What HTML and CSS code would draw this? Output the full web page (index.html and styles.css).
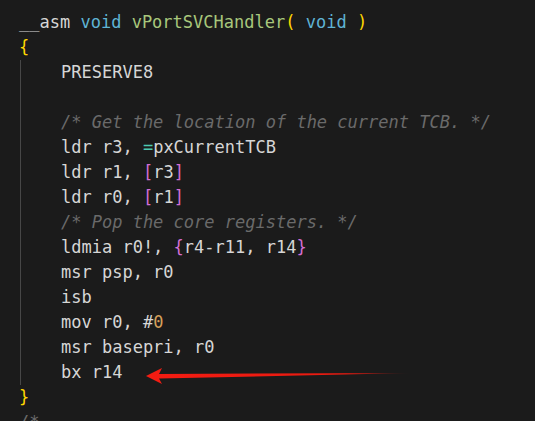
FILE: index.html
```html
<!DOCTYPE html>
<html>
<head>
<meta charset="utf-8">
<link rel="stylesheet" href="styles.css">
</head>
<body>
<div class="editor">
  <div class="line"><span class="plain">__asm</span> <span class="kw">void</span> <span class="fn">vPortSVCHandler</span><span class="br1">(</span> <span class="kw">void</span> <span class="br1">)</span></div>
  <div class="line"><span class="br1">{</span></div>
  <div class="block">
    <div class="line">PRESERVE8</div>
    <div class="line"> </div>
    <div class="line"><span class="cm">/* Get the location of the current TCB. */</span></div>
    <div class="line">ldr r3, <span class="op">=</span>pxCurrentTCB</div>
    <div class="line">ldr r1, <span class="br2">[</span>r3<span class="br2">]</span></div>
    <div class="line">ldr r0, <span class="br2">[</span>r1<span class="br2">]</span></div>
    <div class="line"><span class="cm">/* Pop the core registers. */</span></div>
    <div class="line">ldmia r0!, <span class="br2">{</span>r4-r11, r14<span class="br2">}</span></div>
    <div class="line">msr psp, r0</div>
    <div class="line">isb</div>
    <div class="line">mov r0, #<span class="num">0</span></div>
    <div class="line">msr basepri, r0</div>
    <div class="line">bx r14</div>
  </div>
  <div class="line"><span class="br1">}</span></div>
  <div class="line"><span class="cm">/*</span></div>
</div>
<svg class="arrow" width="280" height="24" viewBox="0 0 280 24">
  <defs>
    <linearGradient id="fade" x1="0" y1="0" x2="1" y2="0">
      <stop offset="0" stop-color="#f51c12"/>
      <stop offset="0.75" stop-color="#e81a10"/>
      <stop offset="1" stop-color="#e81a10" stop-opacity="0"/>
    </linearGradient>
  </defs>
  <path d="M2 12 L18 4 L15 10 L268 9 L15 14.5 L18 20 Z" fill="url(#fade)"/>
</svg>
</body>
</html>
```
FILE: styles.css
```css
html, body {
  margin: 0;
  padding: 0;
  background: #1b1b1b;
  overflow: hidden;
}
body {
  position: relative;
  width: 535px;
  height: 421px;
}
.editor {
  padding: 10px 0 0 19px;
  font-family: "DejaVu Sans Mono", "Liberation Mono", monospace;
  font-size: 17px;
  color: #d6d6d6;
}
.line {
  height: 25px;
  line-height: 25px;
  white-space: pre;
}
.block {
  margin-left: 1px;
  padding-left: 40px;
  border-left: 1px solid #474747;
}
.kw { color: #5fb3d4; }
.fn { color: #a8c77c; }
.plain { color: #d6d6d6; }
.br1 { color: #ffd700; }
.br2 { color: #d46ed4; }
.op { color: #4ec9b0; }
.num { color: #d7a05a; }
.cm { color: #6a6a6a; font-style: italic; }
.arrow {
  position: absolute;
  left: 144px;
  top: 364px;
}
```
